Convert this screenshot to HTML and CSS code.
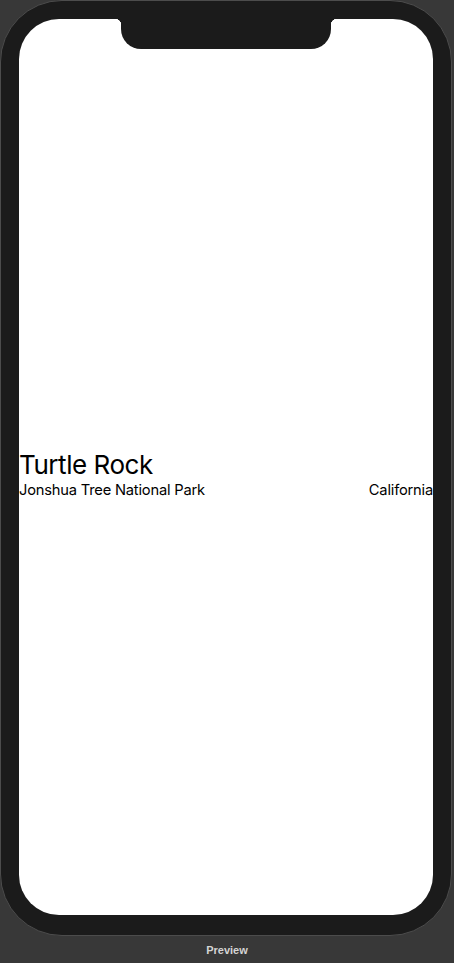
FILE: index.html
```html
<!DOCTYPE html>
<html>
<head>
<meta charset="utf-8">
<link rel="stylesheet" href="styles.css">
</head>
<body>
<div class="canvas">
  <div class="device">
    <div class="screen">
      <div class="notch"></div>
      <div class="info">
        <div class="title">Turtle Rock</div>
        <div class="row">
          <span>Jonshua Tree National Park</span>
          <span>California</span>
        </div>
      </div>
    </div>
  </div>
  <div class="caption">Preview</div>
</div>
</body>
</html>
```

FILE: styles.css
```css
html, body {
  margin: 0;
  padding: 0;
  background: #383838;
}
.canvas {
  width: 454px;
  height: 963px;
  display: flex;
  flex-direction: column;
  align-items: flex-start;
}
.device {
  box-sizing: border-box;
  width: 452px;
  height: 936px;
  padding: 18px;
  background: #1b1b1b;
  border: 1px solid #4c4c4c;
  border-radius: 62px;
}
.screen {
  position: relative;
  box-sizing: border-box;
  width: 414px;
  height: 896px;
  padding-top: 12px;
  background: #ffffff;
  border-radius: 40px;
  display: flex;
  flex-direction: column;
  justify-content: center;
  font-family: Inter, "Noto Sans", sans-serif;
  color: #000;
}
.notch {
  position: absolute;
  top: 0;
  left: 102px;
  width: 210px;
  height: 30px;
  background: #1b1b1b;
  border-radius: 0 0 20px 20px;
}
.notch::before,
.notch::after {
  content: "";
  position: absolute;
  top: 0;
  width: 6px;
  height: 6px;
}
.notch::before {
  left: -6px;
  background: radial-gradient(circle at 0 100%, transparent 6px, #1b1b1b 6.5px);
}
.notch::after {
  right: -6px;
  background: radial-gradient(circle at 100% 100%, transparent 6px, #1b1b1b 6.5px);
}
.title {
  font-size: 26px;
  line-height: 33px;
  letter-spacing: -0.45px;
}
.row {
  display: flex;
  justify-content: space-between;
  font-size: 14.7px;
  line-height: 18px;
  letter-spacing: -0.2px;
}
.caption {
  width: 454px;
  margin-top: 8px;
  text-align: center;
  font-family: "Liberation Sans", Arial, sans-serif;
  font-weight: bold;
  font-size: 11px;
  color: #d4d4d4;
}
```
